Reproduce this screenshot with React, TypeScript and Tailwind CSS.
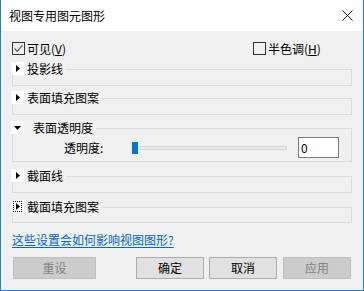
import React from 'react';

const font = { fontFamily: '"Noto Sans CJK SC", "Microsoft YaHei", sans-serif' };

function Arrow({ open, focus }: { open?: boolean; focus?: boolean }) {
    return (
        <div className="w-[13px] h-[13px] bg-white flex items-center justify-center">
            <div className={focus ? "w-[9px] h-[11px] border border-dotted border-black flex items-center justify-center" : "flex items-center justify-center"}>
                {open ? (
                    <svg width="7" height="4" viewBox="0 0 7 4"><path d="M0 0h7L3.5 4z" fill="#000" /></svg>
                ) : (
                    <svg width="4" height="7" viewBox="0 0 4 7"><path d="M0 0v7l4-3.5z" fill="#000" /></svg>
                )}
            </div>
        </div>
    );
}

function Group({ title, open, focus, className, children }: { title: string; open?: boolean; focus?: boolean; className: string; children?: React.ReactNode }) {
    return (
        <div className={"relative border border-[#dcdcdc] " + className}>
            <div className="absolute -top-[8px] -left-[2px] flex items-center bg-[#f0f0f0] pr-[3px]">
                <Arrow open={open} focus={focus} />
                <span className={"text-[12px] leading-[13px] text-black " + (open ? "ml-[9px]" : "ml-[3px]")}>{title}</span>
            </div>
            {children}
        </div>
    );
}

function Check({ checked }: { checked?: boolean }) {
    return (
        <div className="w-[13px] h-[13px] border border-[#333] bg-[#f0f0f0] flex items-center justify-center">
            {checked && (
                <svg width="11" height="11" viewBox="0 0 11 11">
                    <path d="M1.5 5.5l2.8 2.8 5.2-6.2" stroke="#666" strokeWidth="1.3" fill="none" />
                </svg>
            )}
        </div>
    );
}

export default function App() {
    return (
        <div className="w-[364px] h-[291px] border-x border-b border-[#1883d7] flex flex-col bg-[#f0f0f0] overflow-hidden" style={font}>
            {/* title bar */}
            <div className="h-[31px] bg-white flex items-center justify-between pl-[8px] pr-[10px]">
                <span className="text-[12px] text-black leading-[14px]">视图专用图元图形</span>
                <svg width="11" height="11" viewBox="0 0 11 11">
                    <path d="M0.5 0.5l10 10M10.5 0.5l-10 10" stroke="#111" strokeWidth="1" />
                </svg>
            </div>

            <div className="flex flex-col px-[11px] pt-[11px]">
                <div className="flex items-center h-[13px]">
                    <div className="w-[241px] flex items-center">
                        <Check checked />
                        <span className="ml-[2px] text-[12px] leading-[13px] text-black">可见(<u>V</u>)</span>
                    </div>
                    <div className="flex items-center">
                        <Check />
                        <span className="ml-[2px] text-[12px] leading-[13px] text-black">半色调(<u>H</u>)</span>
                    </div>
                </div>

                <Group title="投影线" className="mt-[14px] h-[17px]" />
                <Group title="表面填充图案" className="mt-[12px] h-[17px]" />
                <Group title="表面透明度" open className="mt-[13px] h-[34px]">
                    <div className="flex items-center pl-[51px] pt-[8px]">
                        <span className="w-[68px] text-[12px] leading-[13px] text-black">透明度:</span>
                        <div className="relative w-[155px] h-[12px]">
                            <div className="absolute left-[2px] right-0 top-[4px] h-[4px] bg-[#e7eaea] border border-[#d6d6d6]" />
                            <div className="absolute left-0 top-0 w-[6px] h-[12px] bg-[#0078d7]" />
                        </div>
                        <div className="ml-[11px] w-[41px] h-[21px] bg-white border border-[#7a7a7a] flex items-center pl-[2px] text-[12px] text-black leading-[13px]">0</div>
                    </div>
                </Group>
                <Group title="截面线" className="mt-[14px] h-[17px]" />
                <Group title="截面填充图案" focus className="mt-[14px] h-[16px]" />

                <a className="mt-[10px] self-start text-[12px] leading-[13px] text-[#0066cc] underline underline-offset-2">这些设置会如何影响视图图形?</a>

                <div className="flex mt-[11px] ml-[1px]">
                    <div className="w-[83px] h-[22px] bg-[#cccccc] border border-[#bfbfbf] flex items-center justify-center text-[12px] text-[#838383]">重设</div>
                    <div className="ml-[40px] w-[68px] h-[22px] bg-[#e1e1e1] border border-[#adadad] flex items-center justify-center text-[12px] text-black">确定</div>
                    <div className="ml-[5px] w-[68px] h-[22px] bg-[#e1e1e1] border border-[#adadad] flex items-center justify-center text-[12px] text-black">取消</div>
                    <div className="ml-[6px] w-[68px] h-[22px] bg-[#cccccc] border border-[#bfbfbf] flex items-center justify-center text-[12px] text-[#838383]">应用</div>
                </div>
            </div>
        </div>
    );
}
